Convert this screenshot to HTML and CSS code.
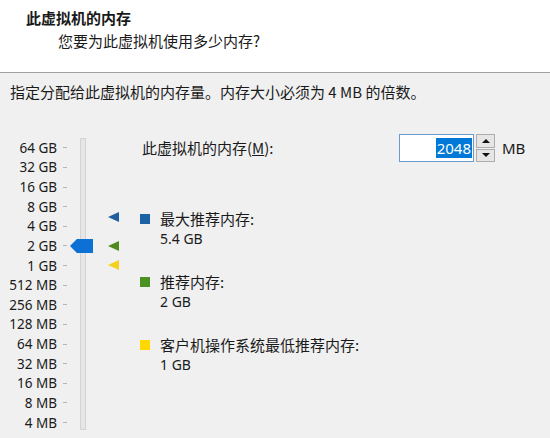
FILE: index.html
```html
<!DOCTYPE html>
<html lang="zh-CN">
<head>
<meta charset="UTF-8">
<title>此虚拟机的内存</title>
<link rel="stylesheet" href="styles.css">
</head>
<body>
<!-- Wizard header -->
<div class="header">
    <div class="title">此虚拟机的内存</div>
    <div class="subtitle">您要为此虚拟机使用多少内存?</div>
</div>

<p class="desc">指定分配给此虚拟机的内存量。内存大小必须为 4 MB 的倍数。</p>

<div class="main">
    <!-- Memory slider -->
    <div class="slider">
        <ul class="scale">
            <li><span>64 GB</span></li>
            <li><span>32 GB</span></li>
            <li><span>16 GB</span></li>
            <li><span>8 GB</span></li>
            <li><span>4 GB</span></li>
            <li><span>2 GB</span></li>
            <li><span>1 GB</span></li>
            <li><span>512 MB</span></li>
            <li><span>256 MB</span></li>
            <li><span>128 MB</span></li>
            <li><span>64 MB</span></li>
            <li><span>32 MB</span></li>
            <li><span>16 MB</span></li>
            <li><span>8 MB</span></li>
            <li><span>4 MB</span></li>
        </ul>
        <div class="track"></div>
        <div class="thumb"></div>
        <div class="marker marker-max"></div>
        <div class="marker marker-rec"></div>
        <div class="marker marker-min"></div>
    </div>

    <div class="panel">
        <div class="mem-row">
            <span class="mem-label">此虚拟机的内存(<u>M</u>):</span>
            <div class="spin-input"><span class="sel">2048</span></div>
            <div class="spin-btns">
                <div class="spin-btn up"></div>
                <div class="spin-btn down"></div>
            </div>
            <span class="unit">MB</span>
        </div>

        <div class="legend">
            <div class="item">
                <div class="swatch blue"></div>
                <div>
                    <div>最大推荐内存:</div>
                    <div class="val">5.4 GB</div>
                </div>
            </div>
            <div class="item">
                <div class="swatch green"></div>
                <div>
                    <div>推荐内存:</div>
                    <div class="val">2 GB</div>
                </div>
            </div>
            <div class="item">
                <div class="swatch yellow"></div>
                <div>
                    <div>客户机操作系统最低推荐内存:</div>
                    <div class="val">1 GB</div>
                </div>
            </div>
        </div>
    </div>
</div>
</body>
</html>
```
FILE: styles.css
```css
body {
    margin: 0;
    background-color: #f0f0f0;
    font-family: "Noto Sans CJK SC", "Noto Sans", sans-serif;
    font-size: 15px;
    color: #1a1a1a;
    line-height: 20px;
    overflow: hidden;
}
.header {
    height: 72px;
    background: #fff;
    border-bottom: 1px solid #a0a0a0;
    padding-top: 8px;
    box-sizing: border-box;
    height: 73px;
}
.title {
    padding-left: 26px;
    font-weight: bold;
}
.subtitle {
    padding-left: 58px;
    margin-top: 3px;
}
.desc {
    margin: 9px 0 0 10px;
}
.main {
    display: flex;
    margin-top: 32px;
}
.slider {
    position: relative;
    width: 140px;
    display: flex;
    padding-top: 4px;
}
.scale {
    list-style: none;
    margin: 0;
    padding: 0;
    width: 70px;
    font-family: "Noto Sans", sans-serif;
    font-size: 13.5px;
}
.scale li {
    height: 19.64px;
    display: flex;
    align-items: center;
}
.scale span {
    width: 57px;
    text-align: right;
}
.scale li::after {
    content: "";
    width: 4px;
    height: 1px;
    margin-left: 6px;
    background: #b4b4b4;
}
.track {
    margin-left: 10px;
    width: 4px;
    height: 290px;
    border: 1px solid #d4d4d4;
    background: #e6e6e6;
}
.thumb {
    position: absolute;
    left: 70px;
    top: 105px;
    width: 23px;
    height: 14px;
    background: #0c70d4;
    clip-path: polygon(0 50%, 30% 0, 100% 0, 100% 100%, 30% 100%);
}
.marker {
    position: absolute;
    left: 108px;
    width: 11px;
    height: 10px;
    clip-path: polygon(0 50%, 100% 0, 100% 100%);
}
.marker-max {
    top: 78px;
    background: #1f5f9e;
}
.marker-rec {
    top: 107px;
    background: #4e8b1f;
}
.marker-min {
    top: 126px;
    background: #f2d21c;
}
.panel {
    flex: 1;
}
.mem-row {
    display: flex;
    align-items: center;
    height: 28px;
}
.mem-label {
    width: 257px;
    padding-left: 2px;
}
.mem-label u {
    text-decoration-thickness: 1px;
}
.spin-input {
    width: 75px;
    height: 28px;
    box-sizing: border-box;
    border: 1px solid #6a9bd0;
    background: #fff;
    text-align: right;
    padding: 3px 1px 0 0;
}
.sel {
    background: #0078d7;
    color: #fff;
    font-family: "Noto Sans", sans-serif;
    font-size: 15px;
    padding: 0 1px;
}
.spin-btns {
    margin-left: 2px;
    width: 19px;
    height: 28px;
    display: flex;
    flex-direction: column;
    gap: 1px;
}
.spin-btn {
    flex: 1;
    border: 1px solid #adadad;
    background: #e6e6e6;
    display: flex;
    align-items: center;
    justify-content: center;
}
.spin-btn::before {
    content: "";
    border-left: 4px solid transparent;
    border-right: 4px solid transparent;
}
.up::before {
    border-bottom: 4px solid #111;
}
.down::before {
    border-top: 4px solid #111;
}
.unit {
    margin-left: 7px;
    font-family: "Noto Sans", sans-serif;
}
.legend {
    margin-top: 47px;
}
.item {
    display: flex;
    margin-bottom: 23px;
}
.swatch {
    width: 10px;
    height: 10px;
    margin: 5px 10px 0 0;
}
.blue {
    background: #1e62a6;
}
.green {
    background: #4b9124;
}
.yellow {
    background: #ffd800;
}
.val {
    font-family: "Noto Sans", sans-serif;
    font-size: 14px;
}
```
